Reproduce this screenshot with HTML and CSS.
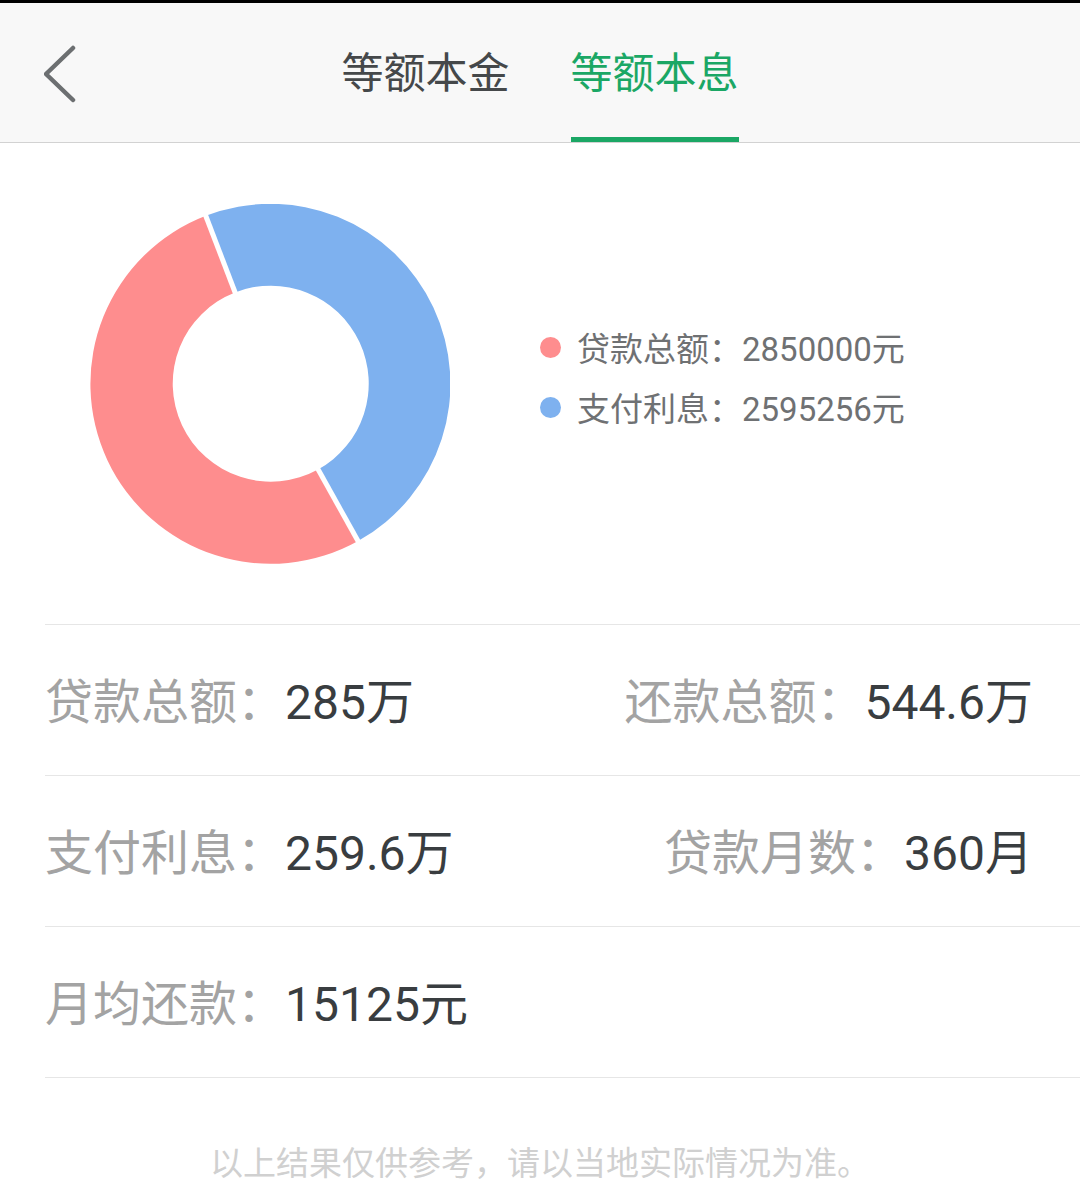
FILE: index.html
```html
<!DOCTYPE html>
<html lang="zh-CN">
<head>
<meta charset="utf-8">
<title>等额本息</title>
<link rel="stylesheet" href="styles.css">
</head>
<body>
<header class="header">
  <div class="back">
    <svg width="40" height="60" viewBox="0 0 40 60"><polyline points="29,4 2,30 29,56" fill="none" stroke="#6c6f71" stroke-width="4.5" stroke-linecap="round" stroke-linejoin="round"/></svg>
  </div>
  <nav class="tabs">
    <div class="tab">等额本金</div>
    <div class="tab active">等额本息</div>
  </nav>
  <div></div>
</header>
<section class="chart">
  <svg class="donut" width="360" height="360" viewBox="0 0 360 360">
    <path d="M268.1 337.0 A180 180 0 1 1 115.8 11.8 L145.0 88.4 A98 98 0 1 0 228.0 265.5 Z" fill="#fe8d8e"/>
    <path d="M115.8 11.8 A180 180 0 0 1 268.1 337.0 L228.0 265.5 A98 98 0 0 0 145.0 88.4 Z" fill="#7eb1ef"/>
    <line x1="148" y1="96" x2="112" y2="2" stroke="#fff" stroke-width="5"/>
    <line x1="224" y1="258" x2="273" y2="346" stroke="#fff" stroke-width="5"/>
  </svg>
  <div class="legend">
    <div class="legend-item"><span class="dot pink"></span><span>贷款总额：2850000元</span></div>
    <div class="legend-item"><span class="dot blue"></span><span>支付利息：2595256元</span></div>
  </div>
</section>
<section class="stats">
  <div class="row">
    <div class="item"><span class="label">贷款总额：</span><span class="value">285万</span></div>
    <div class="item"><span class="label">还款总额：</span><span class="value">544.6万</span></div>
  </div>
  <div class="row">
    <div class="item"><span class="label">支付利息：</span><span class="value">259.6万</span></div>
    <div class="item"><span class="label">贷款月数：</span><span class="value">360月</span></div>
  </div>
  <div class="row last">
    <div class="item"><span class="label">月均还款：</span><span class="value">15125元</span></div>
  </div>
</section>
<p class="note">以上结果仅供参考，请以当地实际情况为准。</p>
</body>
</html>
```
FILE: styles.css
```css
html, body {
  margin: 0;
  padding: 0;
  background: #ffffff;
  font-family: Roboto, "Noto Sans CJK SC", sans-serif;
}

.header {
  display: grid;
  grid-template-columns: 1fr auto 1fr;
  align-items: stretch;
  height: 143px;
  box-sizing: border-box;
  border-top: 3px solid #000;
  border-bottom: 1px solid #d2d2d2;
  background: #f8f8f8;
}

.back {
  display: flex;
  align-items: center;
  padding-left: 44px;
  padding-top: 2px;
}

.back svg { display: block; }

.tabs {
  display: flex;
  gap: 61px;
}

.tab {
  display: flex;
  align-items: center;
  box-sizing: border-box;
  height: 139px;
  padding-top: 8px;
  border-bottom: 5px solid transparent;
  font-size: 42px;
  line-height: 1;
  color: #45484a;
}

.tab.active {
  color: #1ba765;
  border-bottom-color: #1ba765;
}

.chart {
  display: flex;
  align-items: center;
  padding: 61px 0 60px 90px;
}

.donut { display: block; }

.legend {
  margin-left: 90px;
  margin-bottom: 14px;
  display: flex;
  flex-direction: column;
}

.legend-item {
  display: flex;
  align-items: center;
  gap: 16px;
  height: 60px;
  font-size: 33px;
  color: #6f7173;
}

.dot {
  width: 21px;
  height: 21px;
  border-radius: 50%;
  flex: none;
}

.dot.pink { background: #fe8d8e; }
.dot.blue { background: #7eb1ef; }

.stats {
  margin-left: 45px;
}

.row {
  display: flex;
  justify-content: space-between;
  align-items: center;
  box-sizing: border-box;
  height: 151px;
  padding-top: 5px;
  padding-right: 47px;
  border-top: 1px solid #e6e6e6;
}

.row.last {
  height: 152px;
  border-bottom: 1px solid #e6e6e6;
}

.item {
  font-size: 48px;
  line-height: 1;
  white-space: nowrap;
}

.label { color: #a3a3a3; }
.value { color: #393d40; }

.note {
  margin: 0;
  padding-top: 66px;
  text-align: center;
  font-size: 33px;
  line-height: 40px;
  color: #d0d0d0;
}
```
